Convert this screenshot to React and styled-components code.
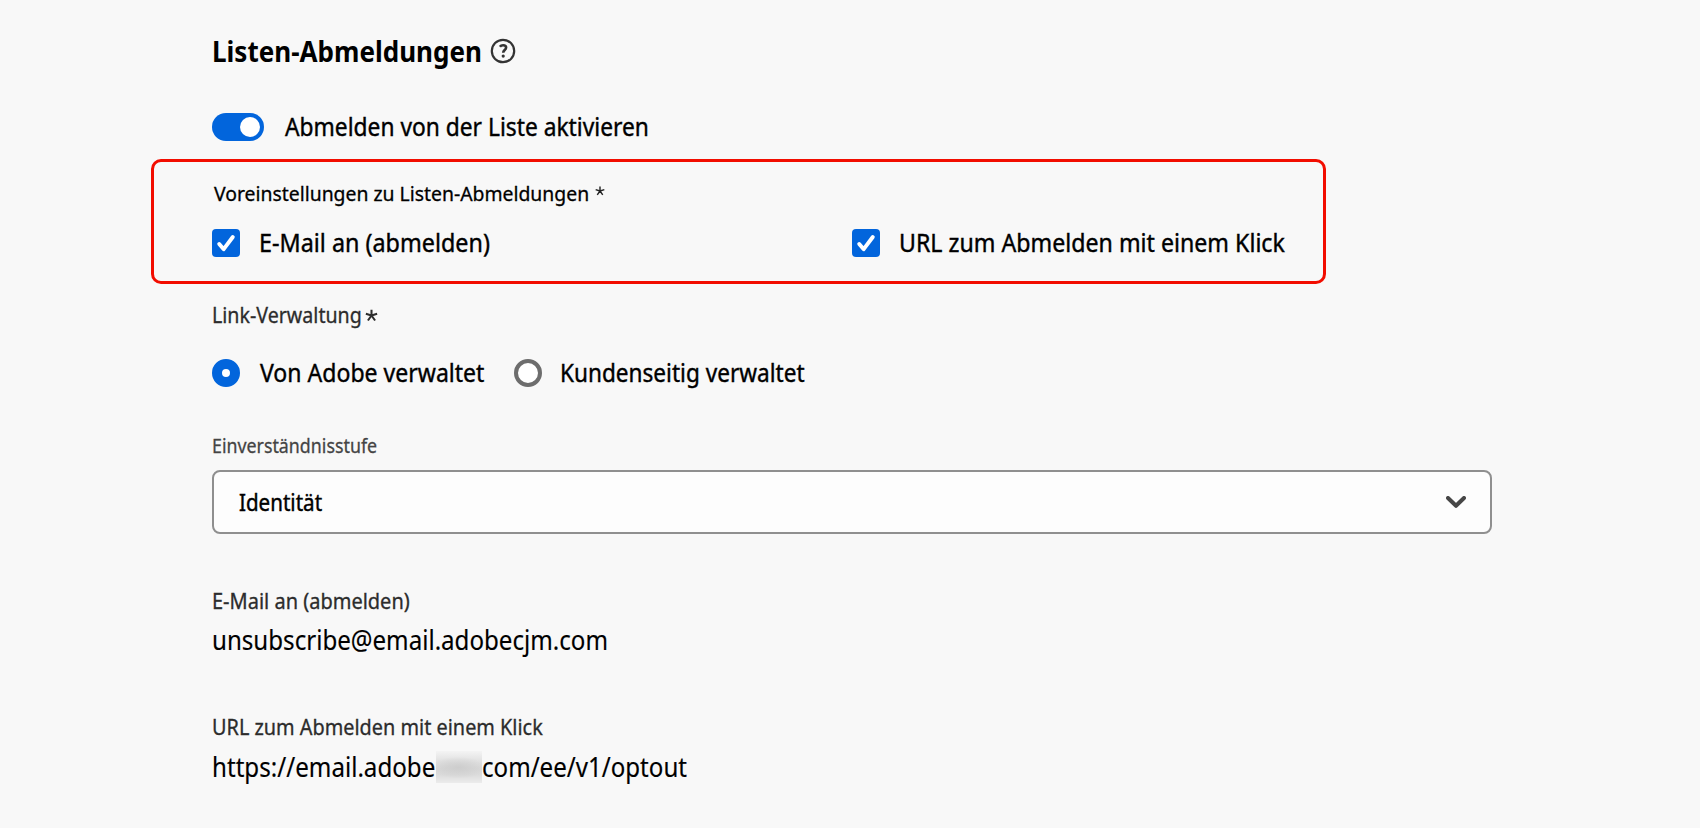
import React from 'react';
import styled, { createGlobalStyle } from 'styled-components';

const GlobalStyle = createGlobalStyle`
  *, *::before, *::after { box-sizing: border-box; }
  body {
    margin: 0;
    background: #f8f8f8;
    color: #000;
    font-family: 'Noto Sans', 'Open Sans', sans-serif;
  }
`;

const Page = styled.main`
  display: flex;
  flex-direction: column;
  min-height: 828px;
  padding: 34px 208px 0 212px;
  overflow: hidden;
`;

/* Text set in a slightly narrowed face; $x is the horizontal scale. */
const Text = styled.span`
  display: block;
  width: ${(p) => p.$w}px;
  flex: none;
  white-space: nowrap;
  transform: scaleX(${(p) => p.$x});
  transform-origin: 0 50%;
`;

const Title = styled(Text).attrs({ as: 'h1' })`
  margin: 0;
  font-size: 28px;
  font-weight: 700;
  line-height: 34px;
`;

const OptionText = styled(Text)`
  margin-bottom: ${(p) => p.$lift || 0}px;
  font-size: 25px;
  line-height: 30px;
  -webkit-text-stroke: 0.4px currentColor;
`;

const FieldLabel = styled(Text)`
  font-size: ${(p) => p.$size || 21}px;
  line-height: 24px;
  color: ${(p) => p.$color || '#2c2c2c'};
  -webkit-text-stroke: 0.3px currentColor;
`;

const Value = styled(Text)`
  font-size: 26.5px;
  line-height: 32px;
  -webkit-text-stroke: 0.15px currentColor;
`;

const Row = styled.div`
  display: flex;
  align-items: center;
  height: ${(p) => p.$h || 30}px;
  margin-top: ${(p) => p.$top || 0}px;
`;

const Switch = styled.div`
  display: flex;
  justify-content: flex-end;
  align-items: center;
  flex: none;
  width: 52px;
  height: 28px;
  margin-right: 21px;
  padding: 0 4px;
  border-radius: 14px;
  background: #0265dc;
`;

const Knob = styled.span`
  width: 20px;
  height: 20px;
  border-radius: 50%;
  background: #fff;
`;

const Highlight = styled.section`
  width: 1175px;
  height: 125px;
  margin: 17px 0 0 -61px;
  padding: 19px 0 0 58px;
  border: 3px solid #f20d00;
  border-radius: 10px;
`;

const Choice = styled.label`
  display: flex;
  align-items: center;
  flex: none;
  width: ${(p) => p.$w}px;
`;

const Box = styled.span`
  display: flex;
  flex: none;
  width: 28px;
  height: 28px;
  margin-right: 19px;
  border-radius: 4px;
  background: #0265dc;
`;

const Radio = styled.span`
  flex: none;
  width: 28px;
  height: 28px;
  margin-right: ${(p) => p.$gap}px;
  border: ${(p) => (p.$on ? '10px solid #0265dc' : '4px solid #6d6d6d')};
  border-radius: 50%;
  background: #fff;
`;

const Select = styled.div`
  display: flex;
  align-items: center;
  justify-content: space-between;
  height: 64px;
  margin-top: 12px;
  padding: 0 24px 0 25px;
  border: 2px solid #8f8f8f;
  border-radius: 8px;
  background: #fdfdfd;
`;

const SelectText = styled(Text)`
  font-size: 24px;
  line-height: 30px;
  -webkit-text-stroke: 0.45px currentColor;
`;

const Field = styled.div`
  display: flex;
  flex-direction: column;
  margin-top: ${(p) => p.$top}px;
`;

const Redacted = styled.span`
  flex: none;
  width: 46px;
  height: 32px;
  margin-left: 1px;
  background:
    radial-gradient(ellipse 60% 34% at 48% 52%, #cdcdcd 0%, rgba(205, 205, 205, 0) 100%),
    linear-gradient(#f4f4f4, #e2e2e2 30%, #d8d8d8 55%, #dcdcdc 75%, #ececec);
`;

const Star = ({ size, color, thick }) => (
  <svg width={size} height={size} viewBox="0 0 12 12" fill="none" stroke={color} strokeWidth={thick}>
    <path d="M6 6V.6M6 6L11.2 4.4M6 6L9.3 10.6M6 6L2.7 10.6M6 6L.8 4.4" />
  </svg>
);

const Help = () => (
  <svg width="26" height="26" viewBox="0 0 26 26" fill="none" stroke="#333">
    <circle cx="13" cy="13" r="11.2" strokeWidth="2.2" />
    <path d="M9.9 8.7C10.6 7.7 11.8 7.2 13.1 7.2c1.9 0 3 .9 3 2.4 0 2.3-2.9 2.6-2.9 5.2" strokeWidth="2.6" />
    <circle cx="13.2" cy="18.1" r="1.6" fill="#333" stroke="none" />
  </svg>
);

const Check = () => (
  <svg width="28" height="28" viewBox="0 0 28 28" fill="none">
    <path d="M7.2 15l4.5 5.2L20.8 8" stroke="#fff" strokeWidth="3.9" strokeLinecap="round" strokeLinejoin="round" />
  </svg>
);

const Chevron = () => (
  <svg width="20" height="12" viewBox="0 0 20 12" fill="none">
    <path d="M2 2l8 7.8L18 2" stroke="#464646" strokeWidth="4" strokeLinecap="round" strokeLinejoin="round" />
  </svg>
);

const Nudge = styled.span`
  display: flex;
  margin: ${(p) => p.$m};
`;

export default function App() {
  return (
    <>
      <GlobalStyle />
      <Page>
        <Row $h={34}>
          <Title $w={278} $x={0.93}>Listen-Abmeldungen</Title>
          <Help />
        </Row>

        <Row $top={44}>
          <Switch><Knob /></Switch>
          <OptionText $w={365} $x={0.911} $lift={2}>Abmelden von der Liste aktivieren</OptionText>
        </Row>

        <Highlight>
          <Row $h={24}>
            <Nudge $m="0 0 0 2px">
              <FieldLabel $w={380} $x={0.945} $size={20.5} $color="#000">Voreinstellungen zu Listen-Abmeldungen</FieldLabel>
            </Nudge>
            <Nudge $m="0 0 5px 1px"><Star size={10} color="#222" thick={1.7} /></Nudge>
          </Row>
          <Row $top={23}>
            <Choice $w={640}>
              <Box><Check /></Box>
              <OptionText $w={231} $x={0.934} $lift={3}>E-Mail an (abmelden)</OptionText>
            </Choice>
            <Choice $w={440}>
              <Box><Check /></Box>
              <OptionText $w={386} $x={0.927} $lift={3}>URL zum Abmelden mit einem Klick</OptionText>
            </Choice>
          </Row>
        </Highlight>

        <Row $top={19} $h={24}>
          <FieldLabel $w={153} $x={0.935}>Link-Verwaltung</FieldLabel>
          <Nudge $m="0"><Star size={13} color="#2c2c2c" thick={1.9} /></Nudge>
        </Row>
        <Row $top={31}>
          <Choice $w={302}>
            <Radio $on $gap={20} />
            <OptionText $w={225} $x={0.922} $lift={2}>Von Adobe verwaltet</OptionText>
          </Choice>
          <Choice $w={300}>
            <Radio $gap={18} />
            <OptionText $w={246} $x={0.904} $lift={2}>Kundenseitig verwaltet</OptionText>
          </Choice>
        </Row>

        <Field $top={46}>
          <FieldLabel $w={168} $x={0.89} $size={20} $color="#444">Einverständnisstufe</FieldLabel>
          <Select>
            <SelectText $w={84} $x={0.857}>Identität</SelectText>
            <Chevron />
          </Select>
        </Field>

        <Field $top={55}>
          <FieldLabel $w={200} $x={0.952}>E-Mail an (abmelden)</FieldLabel>
          <Row $top={11} $h={32}>
            <Value $w={397} $x={0.91}>unsubscribe@email.adobecjm.com</Value>
          </Row>
        </Field>

        <Field $top={59}>
          <FieldLabel $w={333} $x={0.946}>URL zum Abmelden mit einem Klick</FieldLabel>
          <Row $top={12} $h={32}>
            <Value $w={223} $x={0.911}>https://email.adobe</Value>
            <Redacted />
            <Value $w={205} $x={0.909}>com/ee/v1/optout</Value>
          </Row>
        </Field>
      </Page>
    </>
  );
}
